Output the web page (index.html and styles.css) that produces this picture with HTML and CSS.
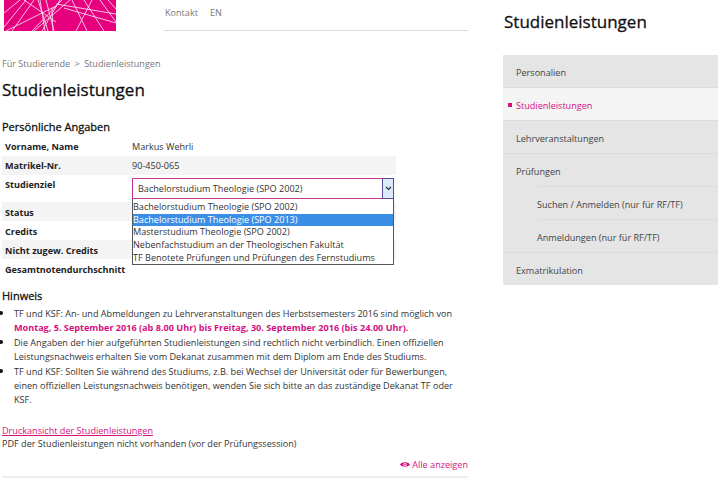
FILE: index.html
```html
<!DOCTYPE html>
<html lang="de">
<head>
    <meta charset="UTF-8">
    <meta name="viewport" content="width=device-width, initial-scale=1.0">
    <title>Studienleistungen</title>
    <link rel="stylesheet" href="styles.css">
</head>
<body>
    <div class="page">
        <div class="main">
            <!-- Kopfzeile -->
            <div class="header">
                <svg class="logo" width="112" height="31" viewBox="0 0 112 31">
                    <rect width="112" height="31" fill="#e6007e"/>
                    <g stroke="#fff" stroke-width="0.9" fill="none" opacity="0.85">
                        <path d="M0 27L22 0M0 13L16 0M8 31L30 0M2 31L52 6M28 31L58 0"/>
                        <path d="M36 0L41 31M34 0L44 31M42 0L50 31M48 8L49 31"/>
                        <path d="M38 31L56 0M30 31L66 0M20 0L52 22"/>
                        <path d="M68 0L83 31M80 0L100 31M96 0L112 22M60 8L112 23M52 4L112 14"/>
                        <path d="M72 31L88 0M104 0L112 9"/>
                    </g>
                </svg>
                <div class="topnav">
                    <a>Kontakt</a>
                    <a>EN</a>
                </div>
            </div>

            <div class="breadcrumb">Für Studierende <span class="crumb-sep">&gt;</span> Studienleistungen</div>
            <h1>Studienleistungen</h1>

            <!-- Persönliche Angaben -->
            <h3 class="section-title">Persönliche Angaben</h3>
            <div class="info-table">
                <div class="info-row"><b>Vorname, Name</b><span>Markus Wehrli</span></div>
                <div class="info-row shaded"><b>Matrikel-Nr.</b><span>90-450-065</span></div>
                <div class="info-row goal-row">
                    <b>Studienziel</b>
                    <div class="select-box">
                        <span>Bachelorstudium Theologie (SPO 2002)</span>
                        <div class="select-btn">
                            <svg width="7" height="5" viewBox="0 0 7 5"><path d="M1 1L3.5 3.5L6 1" stroke="#333" stroke-width="1.2" fill="none"/></svg>
                        </div>
                        <ul class="select-list">
                            <li>Bachelorstudium Theologie (SPO 2002)</li>
                            <li class="hover">Bachelorstudium Theologie (SPO 2013)</li>
                            <li>Masterstudium Theologie (SPO 2002)</li>
                            <li>Nebenfachstudium an der Theologischen Fakultät</li>
                            <li>TF Benotete Prüfungen und Prüfungen des Fernstudiums</li>
                        </ul>
                    </div>
                </div>
                <div class="info-row shaded status-row"><b>Status</b></div>
                <div class="info-row status-row"><b>Credits</b></div>
                <div class="info-row shaded status-row"><b>Nicht zugew. Credits</b></div>
                <div class="info-row status-row"><b>Gesamtnotendurchschnitt</b></div>
            </div>

            <!-- Hinweis -->
            <h3 class="section-title hint-title">Hinweis</h3>
            <ul class="hint-list">
                <li>TF und KSF: An- und Abmeldungen zu Lehrveranstaltungen des Herbstsemesters 2016 sind möglich von <b class="accent">Montag, 5. September 2016 (ab 8.00 Uhr) bis Freitag, 30. September 2016 (bis 24.00 Uhr).</b></li>
                <li>Die Angaben der hier aufgeführten Studienleistungen sind rechtlich nicht verbindlich. Einen offiziellen Leistungsnachweis erhalten Sie vom Dekanat zusammen mit dem Diplom am Ende des Studiums.</li>
                <li>TF und KSF: Sollten Sie während des Studiums, z.B. bei Wechsel der Universität oder für Bewerbungen, einen offiziellen Leistungsnachweis benötigen, wenden Sie sich bitte an das zuständige Dekanat TF oder KSF.</li>
            </ul>

            <a class="print-link">Druckansicht der Studienleistungen</a>
            <div class="pdf-note">PDF der Studienleistungen nicht vorhanden (vor der Prüfungssession)</div>

            <div class="show-all">
                <svg width="10" height="7" viewBox="0 0 10 7"><path d="M0 3.5C2 0.5 8 0.5 10 3.5C8 6.5 2 6.5 0 3.5Z" fill="#d5107f"/><circle cx="5" cy="3.5" r="1.6" fill="#fff"/><circle cx="5" cy="3.5" r="0.8" fill="#d5107f"/></svg>
                <a>Alle anzeigen</a>
            </div>
            <div class="bottom-rule"></div>
        </div>

        <!-- Seitennavigation -->
        <div class="side">
            <h2>Studienleistungen</h2>
            <ul class="side-nav">
                <li>Personalien</li>
                <li class="active">Studienleistungen</li>
                <li>Lehrveranstaltungen</li>
                <li class="parent">Prüfungen
                    <ul class="sub-nav">
                        <li>Suchen / Anmelden (nur für RF/TF)</li>
                        <li>Anmeldungen (nur für RF/TF)</li>
                    </ul>
                </li>
                <li>Exmatrikulation</li>
            </ul>
        </div>
    </div>
</body>
</html>
```

FILE: styles.css
```css
* {
    box-sizing: border-box;
}

body {
    margin: 0;
    background-color: #fff;
    font-family: "Open Sans", "Noto Sans", sans-serif;
    font-size: 9.1px;
    color: #333;
}

.page {
    display: flex;
    height: 478px;
    overflow: hidden;
}

.main {
    width: 466px;
    margin-left: 2px;
    flex-shrink: 0;
}

/* Kopfzeile */
.header {
    display: flex;
    height: 31px;
}

.logo {
    display: block;
    margin-left: 2px;
}

.topnav {
    flex: 1;
    margin-left: 48px;
    padding: 6px 0 0 1px;
    border-bottom: 1px solid #ddd;
    color: #777;
    display: flex;
    gap: 12px;
}

.breadcrumb {
    margin-top: 26px;
    line-height: 14px;
    color: #777;
}

.crumb-sep {
    margin: 0 2px;
}

h1 {
    margin: 6px 0 0;
    font-size: 17px;
    line-height: 26px;
    font-weight: 400;
    color: #111;
    -webkit-text-stroke: 0.3px #111;
}

.section-title {
    margin: 15px 0 0;
    font-size: 11px;
    line-height: 18px;
    font-weight: 400;
    color: #111;
    -webkit-text-stroke: 0.3px #111;
}

.hint-title {
    margin-top: 9px;
}

/* Tabelle */
.info-table {
    width: 394px;
    margin-top: 1px;
}

.info-row {
    display: flex;
    height: 19px;
    padding-left: 3px;
    line-height: 19px;
}

.status-row {
    line-height: 21px;
}

.info-row b {
    width: 127px;
    flex-shrink: 0;
    color: #222;
    white-space: nowrap;
}

.shaded {
    background-color: #f4f4f4;
}

.goal-row {
    height: 27px;
}

.select-box {
    position: relative;
    width: 262px;
    height: 21px;
    margin-top: 3px;
    padding-left: 5px;
    border: 1px solid #c0378f;
    line-height: 19px;
    background-color: #fff;
}

.select-btn {
    position: absolute;
    top: -1px;
    right: -1px;
    width: 12px;
    height: 21px;
    border: 1px solid #5b4a9e;
    background-color: #dcebfb;
    display: flex;
    align-items: center;
    justify-content: center;
}

.select-list {
    position: absolute;
    top: 20px;
    left: -1px;
    width: 262px;
    margin: 0;
    padding: 2px 0 0;
    list-style: none;
    border: 1px solid #555;
    border-top: none;
    background-color: #fff;
    z-index: 10;
}

.select-list li {
    height: 12.7px;
    line-height: 12.7px;
    white-space: nowrap;
}

.select-list .hover {
    background-color: #3a8ee6;
    color: #fff;
}

/* Hinweis */
.hint-list {
    margin: 1px 0 0;
    padding: 0 0 0 12px;
}

.hint-list li {
    line-height: 14px;
    color: #333;
}

.hint-list li::marker {
    color: #111;
    font-size: 11px;
}

.accent {
    color: #d5107f;
}

.print-link {
    display: block;
    margin-top: 17px;
    line-height: 13px;
    color: #d5107f;
    text-decoration: underline;
}

.pdf-note {
    line-height: 13px;
}

.show-all {
    display: flex;
    align-items: center;
    justify-content: flex-end;
    gap: 2px;
    margin-top: 8px;
    line-height: 13px;
    color: #d5107f;
}

.bottom-rule {
    height: 2px;
    margin-top: 5px;
    background-color: #eee;
}

/* Seitennavigation */
.side {
    width: 215px;
    margin-left: 35px;
    flex-shrink: 0;
}

.side h2 {
    margin: 11px 0 0 1px;
    font-size: 17px;
    line-height: 22px;
    font-weight: 400;
    color: #111;
    -webkit-text-stroke: 0.3px #111;
}

.side-nav {
    margin: 22px 0 0;
    padding: 0;
    list-style: none;
    background-color: #e5e5e5;
    color: #444;
}

.side-nav > li {
    padding: 12px 0 8px 13px;
    line-height: 12px;
    border-bottom: 1px solid #dcdcdc;
}

.side-nav > li:last-child {
    border-bottom: none;
}

.side-nav > .active {
    position: relative;
    background-color: #f4f4f4;
    color: #d5107f;
}

.side-nav > .active::before {
    content: "";
    position: absolute;
    left: 5px;
    top: 15px;
    width: 4px;
    height: 4px;
    background-color: #d5107f;
}

.side-nav > .parent {
    padding-bottom: 0;
}

.sub-nav {
    margin: 8px 0 0;
    padding: 0;
    list-style: none;
}

.sub-nav li {
    margin-left: 21px;
    padding: 12px 0 8px;
    line-height: 12px;
    border-top: 1px solid #dcdcdc;
}
```
